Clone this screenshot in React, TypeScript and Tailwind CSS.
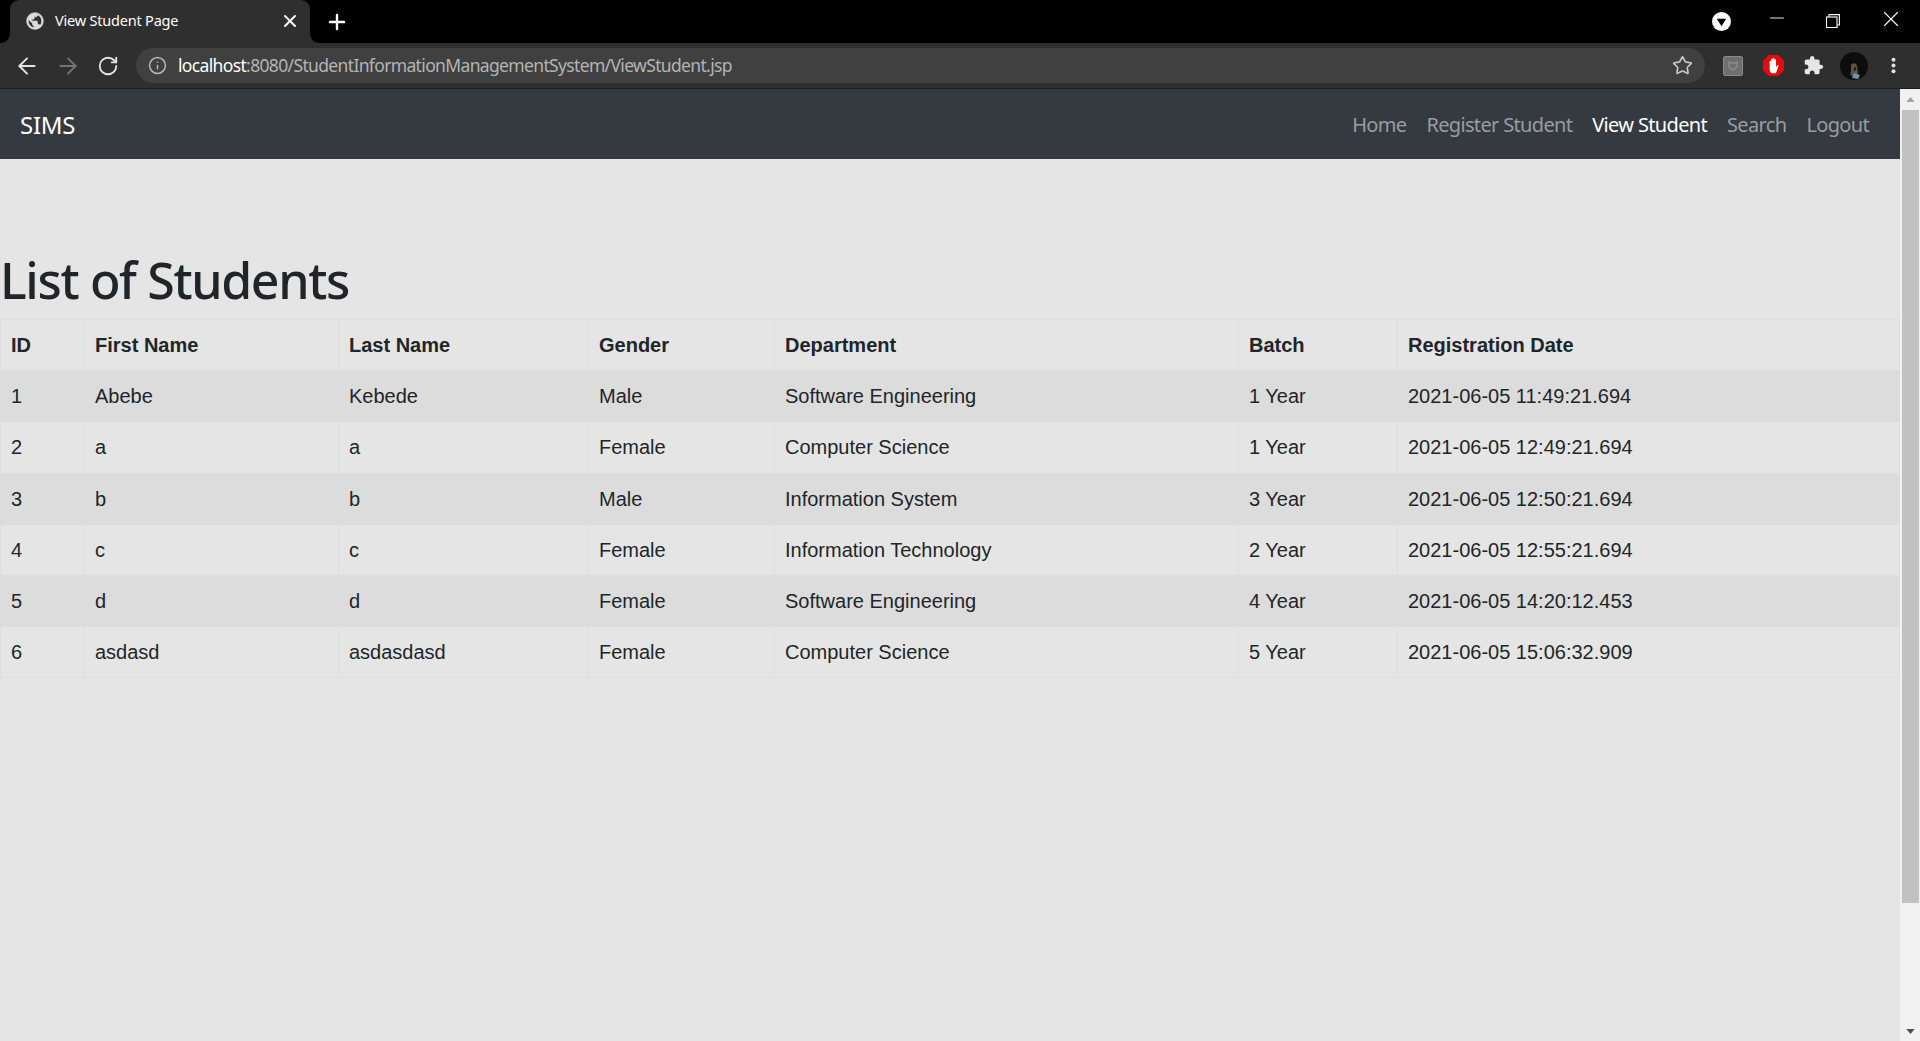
import React from 'react';
import { ArrowLeft, ArrowRight, RotateCw, Info, Star, X, Plus, Minus } from 'lucide-react';

const students = [
  ['1', 'Abebe', 'Kebede', 'Male', 'Software Engineering', '1 Year', '2021-06-05 11:49:21.694'],
  ['2', 'a', 'a', 'Female', 'Computer Science', '1 Year', '2021-06-05 12:49:21.694'],
  ['3', 'b', 'b', 'Male', 'Information System', '3 Year', '2021-06-05 12:50:21.694'],
  ['4', 'c', 'c', 'Female', 'Information Technology', '2 Year', '2021-06-05 12:55:21.694'],
  ['5', 'd', 'd', 'Female', 'Software Engineering', '4 Year', '2021-06-05 14:20:12.453'],
  ['6', 'asdasd', 'asdasdasd', 'Female', 'Computer Science', '5 Year', '2021-06-05 15:06:32.909'],
];

const headers = [
  { label: 'ID', width: 'w-[84px]' },
  { label: 'First Name', width: 'w-[254px]' },
  { label: 'Last Name', width: 'w-[250px]' },
  { label: 'Gender', width: 'w-[186px]' },
  { label: 'Department', width: 'w-[464px]' },
  { label: 'Batch', width: 'w-[159px]' },
  { label: 'Registration Date', width: 'w-[502px]' },
];

const ChromeBar: React.FC = () => {
  return (
    <div>
      {/* Tab strip */}
      <div className="h-[43px] bg-black flex items-end pl-[10px] text-white">
        <div className="relative w-[300px] h-[43px] bg-[#2f2f2f] rounded-t-[9px] flex items-center pl-[15px] pr-[10px]">
          <svg viewBox="0 0 10 10" className="absolute left-[-10px] bottom-0 w-[10px] h-[10px] fill-[#2f2f2f]"><path d="M10 0v10H0C6 10 10 6 10 0z" /></svg>
          <svg viewBox="0 0 10 10" className="absolute right-[-10px] bottom-0 w-[10px] h-[10px] fill-[#2f2f2f]"><path d="M0 0v10h10C4 10 0 6 0 0z" /></svg>
          <svg viewBox="0 0 24 24" className="w-[20px] h-[20px] mb-[2px] fill-[#dcdcdc] stroke-[#dcdcdc] stroke-[0.7] shrink-0">
            <path d="M12 2C6.48 2 2 6.48 2 12s4.48 10 10 10 10-4.48 10-10S17.52 2 12 2zm-1 17.93c-3.95-.49-7-3.85-7-7.93 0-.62.08-1.21.21-1.79L9 15v1c0 1.1.9 2 2 2v1.93zm6.9-2.54c-.26-.81-1-1.39-1.9-1.39h-1v-3c0-.55-.45-1-1-1H8v-2h2c.55 0 1-.45 1-1V7h2c1.1 0 2-.9 2-2v-.41c2.93 1.19 5 4.06 5 7.41 0 2.08-.8 3.97-2.1 5.39z" />
          </svg>
          <span className="ml-[10px] mb-[2px] text-[14.5px] tracking-[-0.2px] font-['Noto_Sans',sans-serif] whitespace-nowrap">View Student Page</span>
          <X className="ml-auto mb-[1px] w-[20px] h-[20px]" strokeWidth={2.4} />
        </div>
        <Plus className="ml-[15px] mb-[9px] w-[24px] h-[24px]" strokeWidth={2.4} />
        <svg viewBox="0 0 20 20" className="ml-auto mb-[12px] w-[19px] h-[19px]">
          <circle cx="10" cy="10" r="10" fill="#fff" />
          <path d="M5 7h10l-5 8z" fill="#000" />
        </svg>
        <Minus className="ml-[35px] mb-[14px] w-[22px] h-[22px]" strokeWidth={1} />
        <svg viewBox="0 0 14 14" className="ml-[38px] mb-[15px] w-[14px] h-[14px] fill-none stroke-white stroke-[1.1]">
          <rect x="0.5" y="3" width="10.5" height="10.5" />
          <path d="M3 3V0.6h10.4V11H11" />
        </svg>
        <X className="ml-[38px] mb-[11px] w-[26px] h-[26px]" strokeWidth={1} />
        <div className="w-[16px]" />
      </div>
      {/* Toolbar */}
      <div className="h-[46px] bg-[#2f2f2f] border-b border-[#1d1d1d] flex items-center pl-[14px] pr-[10px]">
        <ArrowLeft className="w-[26px] h-[26px] shrink-0 text-[#e4e4e4]" strokeWidth={1.8} />
        <ArrowRight className="ml-[15px] w-[26px] h-[26px] shrink-0 text-[#737373]" strokeWidth={1.8} />
        <RotateCw className="ml-[16px] w-[22px] h-[22px] shrink-0 text-[#e4e4e4]" strokeWidth={2} />
        <div className="ml-[17px] h-[35px] w-[1569px] shrink-0 rounded-full bg-[#404040] flex items-center pl-[12px] pr-[12px] font-['Noto_Sans',sans-serif] text-[17.5px] tracking-[-0.65px]">
          <Info className="w-[19px] h-[19px] text-[#b5b5b5]" strokeWidth={1.9} />
          <span className="ml-[11px] text-white">localhost</span>
          <span className="text-[#b4b4b4]">:8080/StudentInformationManagementSystem/ViewStudent.jsp</span>
          <Star className="ml-auto w-[21px] h-[21px] text-[#c8c8c8]" strokeWidth={1.9} />
        </div>
        <div className="ml-[18px] w-[20px] h-[20px] shrink-0 rounded-[2px] bg-[#6f6f6f] border border-[#8a8a8a] flex items-center justify-center">
          <svg viewBox="0 0 12 12" className="w-[12px] h-[12px] fill-none stroke-[#8c8c8c] stroke-[1.4]">
            <path d="M2 2l2 1h4l2-1v5l-4 3-4-3z" />
          </svg>
        </div>
        <svg viewBox="0 0 24 24" className="ml-[19px] w-[23px] h-[23px] shrink-0">
          <path d="M7 1h10l6 6v10l-6 6H7l-6-6V7z" fill="#e40b0b" />
          <path d="M8 16V8c0-1.2 1.6-1.2 1.6 0V11V5.5c0-1.2 1.7-1.2 1.7 0V11V5c0-1.2 1.7-1.2 1.7 0v6V6.5c0-1.2 1.6-1.2 1.6 0V14l1-2c.7-1 2-.4 1.5.7L15 19c-.5 1-1.2 1.2-2.2 1.2h-2C9 20.2 8 18 8 16z" fill="#fff" />
        </svg>
        <svg viewBox="0 0 24 24" className="ml-[18px] w-[21px] h-[21px] shrink-0 fill-[#e6e6e6]">
          <path d="M20.5 11H19V7c0-1.1-.9-2-2-2h-4V3.5C13 2.12 11.88 1 10.5 1S8 2.12 8 3.5V5H4c-1.1 0-1.99.9-1.99 2v3.8H3.5c1.49 0 2.7 1.21 2.7 2.7s-1.21 2.7-2.7 2.7H2V20c0 1.1.9 2 2 2h3.8v-1.5c0-1.49 1.21-2.7 2.7-2.7 1.49 0 2.7 1.21 2.7 2.7V22H17c1.1 0 2-.9 2-2v-4h1.5c1.38 0 2.5-1.12 2.5-2.5S21.88 11 20.5 11z" />
        </svg>
        <svg viewBox="0 0 28 28" className="ml-[16px] w-[28px] h-[28px] shrink-0">
          <circle cx="14" cy="14" r="14" fill="#0d0d0d" />
          <path d="M11 13c2-3 6-2 6 1l1 7c-1 3-6 4-8 2l1-4z" fill="#5c5340" />
          <path d="M14 16c1-1 2-1 2 0l-1 3h-1z" fill="#14130f" />
          <path d="M14 21l6 2-2 4-6-1z" fill="#6f93b3" />
        </svg>
        <svg viewBox="0 0 6 20" className="ml-[23px] w-[5px] h-[17px] shrink-0 fill-[#e0e0e0]">
          <circle cx="3" cy="3" r="2.4" />
          <circle cx="3" cy="10" r="2.4" />
          <circle cx="3" cy="17" r="2.4" />
        </svg>
      </div>
    </div>
  );
};

const Navbar: React.FC = () => {
  return (
    <nav className="h-[70px] bg-[#343a40] flex items-center justify-between pl-[20px] pr-[31px] font-['Noto_Sans',sans-serif]">
      <a className="mt-[2px] text-[24px] text-white tracking-[-0.3px]">SIMS</a>
      <ul className="mt-[1px] flex gap-[20px] text-[20px] tracking-[-0.66px] text-[#9a9da0]">
        <li>Home</li>
        <li>Register Student</li>
        <li className="text-white">View Student</li>
        <li>Search</li>
        <li>Logout</li>
      </ul>
    </nav>
  );
};

const App: React.FC = () => {
  return (
    <div className="h-[1041px] overflow-hidden bg-[#e5e5e5] flex flex-col">
      <ChromeBar />
      <div className="flex-1 flex">
        <div className="flex-1">
          <Navbar />
          <h1 className="mt-[89px] h-[71px] font-['Noto_Sans',sans-serif] font-medium text-[50px] leading-[65px] tracking-[-1.35px] text-[#212529]">List of Students</h1>
          <table className="table-fixed border-collapse w-[1899px] font-['Liberation_Sans',sans-serif] text-[20px] text-[#212529]">
            <thead>
              <tr className="h-[51.2px]">
                {headers.map((h) => (
                  <th key={h.label} className={`${h.width} border border-[#dedede] px-[10px] text-left font-bold`}>{h.label}</th>
                ))}
              </tr>
            </thead>
            <tbody>
              {students.map((row, i) => (
                <tr key={row[0]} className={i % 2 === 0 ? 'h-[51.2px] bg-[#dcdcdc]' : 'h-[51.2px]'}>
                  {row.map((cell, j) => (
                    <td key={j} className={i % 2 === 0 ? 'border border-[#dcdcdc] px-[10px]' : 'border border-[#dedede] px-[10px]'}>{cell}</td>
                  ))}
                </tr>
              ))}
            </tbody>
          </table>
        </div>
        {/* Scrollbar */}
        <div className="w-[21px] bg-[#f1f1f1] flex flex-col items-center">
          <svg viewBox="0 0 10 6" className="mt-[8px] w-[9px] h-[5px] fill-[#a3a3a3]"><path d="M5 0l5 6H0z" /></svg>
          <div className="mt-[8px] w-[17px] h-[793px] bg-[#c1c1c1]" />
          <svg viewBox="0 0 10 6" className="mt-auto mb-[7px] w-[9px] h-[5px] fill-[#505050]"><path d="M0 0h10L5 6z" /></svg>
        </div>
      </div>
    </div>
  );
};

export default App;
